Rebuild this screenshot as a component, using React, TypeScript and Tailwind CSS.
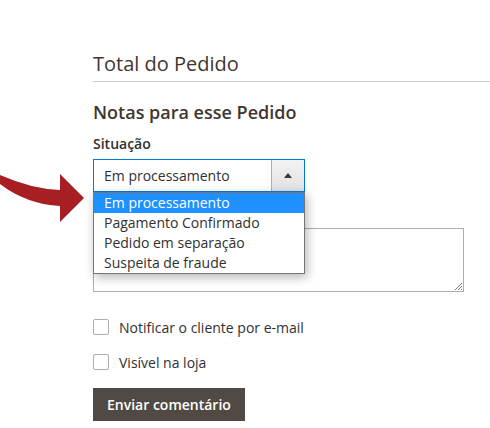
import React from "react";

export default function App() {
  const options = [
    "Em processamento",
    "Pagamento Confirmado",
    "Pedido em separação",
    "Suspeita de fraude",
  ];
  return (
    <div
      className="relative w-[490px] h-[428px] overflow-hidden bg-white text-[#303030]"
      style={{ fontFamily: '"Open Sans", "Noto Sans", sans-serif' }}
    >
      {/* red annotation arrow */}
      <svg
        className="absolute left-0 top-[170px]"
        width="90"
        height="56"
        viewBox="0 170 90 56"
      >
        <path
          d="M0,175 Q32,189 60,190 L60,174 L84,198 L60,222 L60,206 Q26,204 0,184 Z"
          fill="#a71f23"
        />
      </svg>

      <div className="pl-[93px] pt-[52px]">
        <div className="border-b border-[#cccccc] pb-[5px]">
          <h2 className="text-[20px] leading-[24px] font-normal text-[#41362f]">
            Total do Pedido
          </h2>
        </div>

        <h3 className="mt-[18px] text-[18px] leading-[24px] font-semibold text-[#41362f]">
          Notas para esse Pedido
        </h3>

        <div className="mt-[10px] text-[14px] leading-[20px] font-semibold text-[#303030]">
          Situação
        </div>

        <div className="relative mt-[5px] w-[212px]">
          <div className="flex h-[33px] border border-[#007bdb] bg-white">
            <div className="flex flex-1 items-center pl-[10px] text-[14px] text-[#303030]">
              Em processamento
            </div>
            <div className="flex w-[33px] items-center justify-center border-l border-[#adadad] bg-gradient-to-b from-[#f2f2f2] to-[#e3e3e3]">
              <svg width="8" height="5" viewBox="0 0 8 5">
                <path d="M0,5 L4,0 L8,5 Z" fill="#41362f" />
              </svg>
            </div>
          </div>

          {/* dropdown list */}
          <ul className="absolute left-0 top-[33px] z-10 w-[212px] border border-[#767676] bg-white shadow-[2px_3px_10px_rgba(0,0,0,0.3)]">
            {options.map((o, i) => (
              <li
                key={o}
                className={
                  i === 0
                    ? "h-[20px] pl-[10px] text-[14px] leading-[20px] bg-[#1e90ff] text-white"
                    : "h-[20px] pl-[10px] text-[14px] leading-[20px] text-[#303030]"
                }
              >
                {o}
              </li>
            ))}
          </ul>
        </div>

        <div className="relative mt-[36px] h-[64px] w-[371px] border border-[#adadad] bg-white">
          <svg
            className="absolute right-[1px] bottom-[1px]"
            width="8"
            height="8"
            viewBox="0 0 8 8"
          >
            <path d="M1,8 L8,1 M4,8 L8,4 M7,8 L8,7" stroke="#777" strokeWidth="1" />
          </svg>
        </div>

        <label className="mt-[25px] flex h-[20px] items-center gap-[10px] text-[14px] text-[#303030]">
          <span className="h-[16px] w-[16px] rounded-[2px] border border-[#adadad] bg-white" />
          Notificar o cliente por e-mail
        </label>

        <label className="mt-[15px] flex h-[20px] items-center gap-[10px] text-[14px] text-[#303030]">
          <span className="h-[16px] w-[16px] rounded-[2px] border border-[#adadad] bg-white" />
          Visível na loja
        </label>

        <button className="mt-[16px] flex h-[33px] items-center bg-[#514943] px-[14px] text-[14px] font-semibold text-white">
          Enviar comentário
        </button>
      </div>
    </div>
  );
}
